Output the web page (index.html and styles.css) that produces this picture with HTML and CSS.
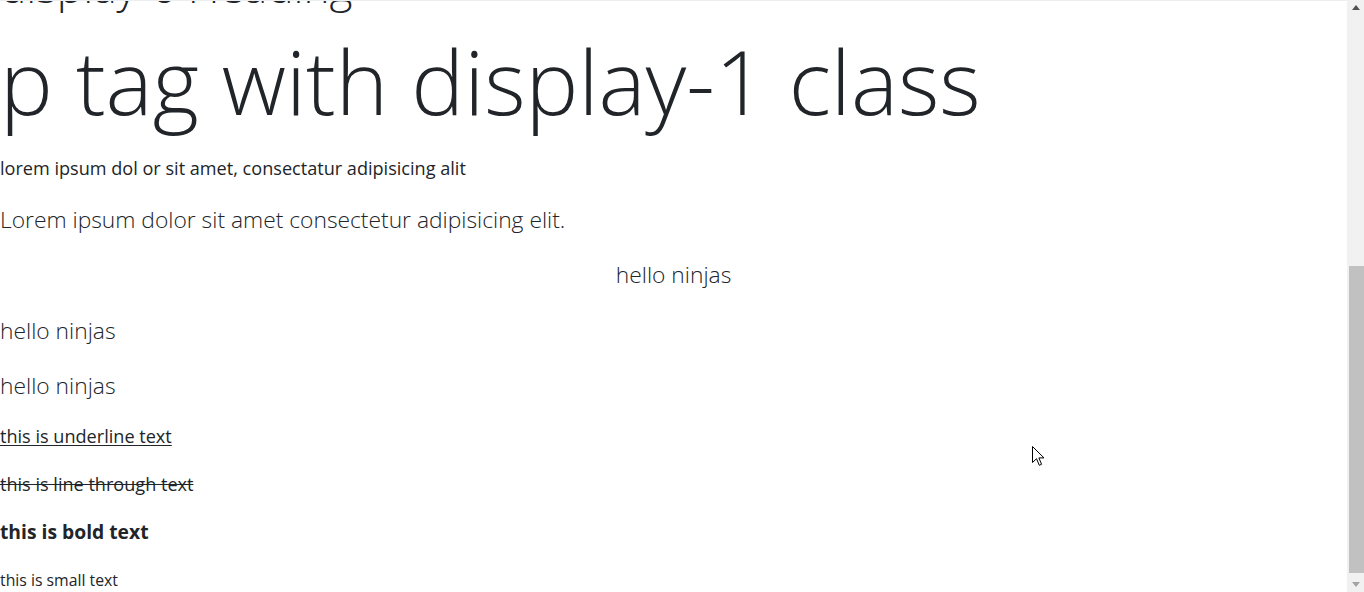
FILE: index.html
```html
<!DOCTYPE html>
<html lang="en">
<head>
<meta charset="utf-8">
<title>Typography</title>
<link rel="stylesheet" href="styles.css">
</head>
<body>
<div class="window">
  <main class="page">
    <h1 class="display-6">display-6 Heading</h1>
    <p class="display-1">p tag with display-1 class</p>
    <p class="text">lorem ipsum dol or sit amet, consectatur adipisicing alit</p>
    <p class="lead">Lorem ipsum dolor sit amet consectetur adipisicing elit.</p>
    <p class="lead center">hello ninjas</p>
    <p class="lead">hello ninjas</p>
    <p class="lead">hello ninjas</p>
    <p class="text underline">this is underline text</p>
    <p class="text strike">this is line through text</p>
    <p class="text bold">this is bold text</p>
    <p class="text small-row"><small class="small">this is small text</small></p>
  </main>
  <div class="scrollbar">
    <div class="sb-btn"><span class="arrow-up"></span></div>
    <div class="sb-track"><div class="sb-thumb"></div></div>
    <div class="sb-btn"><span class="arrow-down"></span></div>
  </div>
  <svg class="cursor" width="14" height="21" viewBox="0 0 14 21">
    <path d="M0.5 0.5 L0.5 16.5 L4.5 12.7 L7.3 19.3 L9.6 18.3 L6.9 11.9 L12 11.9 Z" fill="#fff" stroke="#000" stroke-width="1" stroke-linejoin="miter"/>
  </svg>
</div>
</body>
</html>
```
FILE: styles.css
```css
html, body {
  margin: 0;
  padding: 0;
  background: #fff;
}

body {
  font-family: "Open Sans", "Noto Sans", sans-serif;
  color: #212529;
}

.window {
  position: relative;
  display: flex;
  width: 1364px;
  height: 592px;
  overflow: hidden;
}

.page {
  flex: 1;
  min-width: 0;
  overflow: hidden;
  border-top: 1px solid #eceef1;
}

.page p, .page h1 {
  margin: 0;
  white-space: nowrap;
}

.display-6 {
  margin-top: -43px !important;
  font-size: 44.2px;
  font-weight: 300;
  line-height: 56.3px;
  margin-bottom: 9.6px !important;
}

.display-1 {
  font-size: 88.8px;
  font-weight: 300;
  line-height: 111.1px;
  padding-top: 1px;
  margin-bottom: 18.2px !important;
}

.text {
  font-size: 18.1px;
  font-weight: 400;
  line-height: 28.8px;
  margin-bottom: 19.2px !important;
}

.lead {
  font-size: 22.8px;
  font-weight: 300;
  line-height: 36px;
  margin-bottom: 19.2px !important;
}

.center {
  text-align: center;
}

.underline {
  margin-top: -1px !important;
  text-decoration: underline;
  text-underline-offset: 2px;
}

.strike {
  text-decoration: line-through;
}

.bold {
  font-size: 19.3px;
  font-weight: 700;
}

.small-row {
  margin-top: -1px !important;
}

.small {
  font-size: 15.8px;
}

/* classic scrollbar */
.scrollbar {
  width: 17px;
  flex: none;
  display: flex;
  flex-direction: column;
  background: #f1f1f1;
}

.sb-btn {
  height: 17px;
  flex: none;
  display: flex;
  align-items: center;
  justify-content: center;
}

.arrow-up {
  width: 0;
  height: 0;
  border-left: 4.5px solid transparent;
  border-right: 4.5px solid transparent;
  border-bottom: 5px solid #505050;
  margin-top: -2px;
}

.arrow-down {
  width: 0;
  height: 0;
  border-left: 4.5px solid transparent;
  border-right: 4.5px solid transparent;
  border-top: 5px solid #a3a3a3;
  margin-top: 2px;
}

.sb-track {
  flex: 1;
  display: flex;
  flex-direction: column;
  justify-content: flex-end;
}

.sb-thumb {
  height: 307px;
  margin-left: 2px;
  margin-bottom: 2px;
  background: #c1c1c1;
}

.cursor {
  position: absolute;
  left: 1032px;
  top: 446px;
}
```
